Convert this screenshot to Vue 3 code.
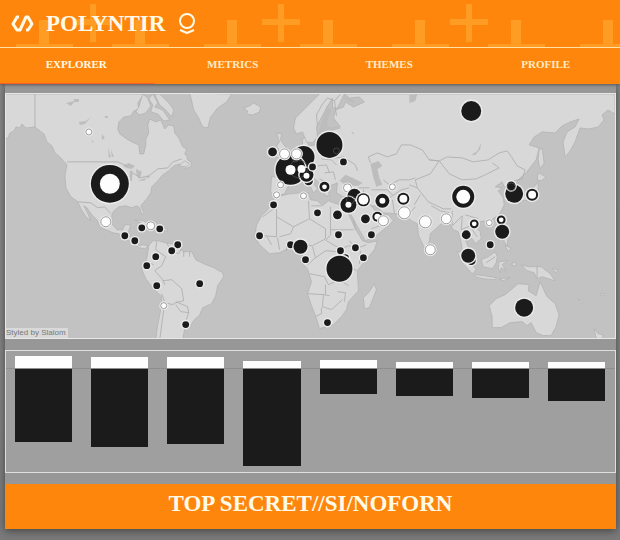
<script setup>
import { ref } from 'vue'

const tabs = ['EXPLORER', 'METRICS', 'THEMES', 'PROFILE']
const active = ref('EXPLORER')

const bars = [
  { up: 12, down: 73 },
  { up: 11, down: 78 },
  { up: 11, down: 75 },
  { up: 7, down: 97 },
  { up: 8, down: 25 },
  { up: 6, down: 27 },
  { up: 6, down: 29 },
  { up: 6, down: 32 },
]

const land = [
  // North and Central America
  'M0 94V140L8 138L10 133L14 131L16 127L20 128L22 124L26 128L35 127L40 131L44 134L47 142L52 146L55 153L61 158L67 165L65 176L66 188L71 197L78 202L81 209L86 217L91 221L88 214L84 206L87 208L92 215L97 220L100 227L106 230L113 233L119 234L125 239L130 241L134 245L140 248L145 249L149 246L143 245L139 246L137 240L131 238L128 236L129 231L131 225L125 225L123 230L117 230L112 224L112 215L114 211L119 207L126 206L132 208L137 206L140 208L142 215L144 213L141 206L147 199L151 193L152 187L158 181L163 175L169 171L174 166L180 164L183 168L188 168L191 167L192 163L188 160L187 156L185 154L187 149L183 147L179 138L175 133L174 126L169 125L165 129L161 120L156 122L150 119L148 125L149 133L146 139L146 145L144 154L140 154L139 145L132 142L127 139L120 134L118 129L119 122L124 117L131 116L134 111L139 109L138 103L144 94Z',
  // Arctic islands
  'M143 94L148 98L151 106L146 113L140 115L136 112L139 107ZM153 94L158 103L155 107L163 110L170 120L164 121L158 114L151 112L153 105L149 99ZM160 94L170 104L174 110L172 117L166 110L160 105L157 99L155 94ZM179 166L185 161L190 164L187 167Z',
  // Greenland and Iceland
  'M190 93L192 101L194 110L199 118L203 127L208 128L211 117L218 108L227 102L232 94ZM244 108L250 106L254 103L261 107L260 112L253 115L247 114L248 111Z',
  // Caribbean
  'M135 220L144 221L150 225L145 225ZM151 225L159 226L157 229L151 228ZM164 229H168V231H164Z',
  // South America
  'M149 246L153 241L158 241L166 243L172 244L178 247L184 252L192 252L196 260L204 264L214 268L223 273L224 277L218 286L216 296L212 304L203 308L200 315L194 321L190 327L185 329L183 340H156L158 325L161 310L162 297L152 287L146 279L142 270L144 265L147 259Z',
  // Africa
  'M257 225L262 216L269 209L271 203L277 197L290 194L301 193L309 193L311 200L318 201L323 206L329 201L340 205L346 206L350 216L356 229L363 241L369 243L378 241L375 250L365 262L358 271L359 291L349 302L347 310L342 317L334 325L320 329L317 319L312 306L308 294L312 282L308 269L302 263L303 253L297 248L290 248L280 253L270 254L260 245L255 237ZM375 284L377 290L370 308L365 309L364 298L370 292Z',
  // Eurasia
  'M345 94L350 98L360 97L365 102L354 107L346 102L344 107L336 110L334 118L341 127L325 130L325 138L315 145L309 146L307 137L303 139L303 147L297 151L290 154L283 159L287 166L287 177L272 177L271 193L277 196L285 194L289 186L298 181L304 180L310 185L314 193L318 189L309 177L313 177L321 184L326 196L330 196L328 187L338 183L337 193L344 197L352 196L352 207L350 212L357 225L366 241L378 235L389 226L394 221L389 215L380 216L372 206L376 206L384 213L398 214L407 215L412 221L418 224L419 235L425 248L430 242L431 234L443 223L449 221L454 230L459 232L462 243L463 250L470 258L474 259L470 249L466 240L468 236L474 240L476 244L482 239L481 232L475 226L480 222L492 220L500 215L505 205L504 198L499 191L503 188L496 187L503 182L505 187L510 187L509 193L513 199L517 196L515 187L519 180L527 173L537 160L540 148L530 145L535 137L543 132L556 133L563 126L571 122L580 119L576 127L568 132L564 142L566 157L571 151L576 142L581 128L590 129L599 127L605 120L603 115L609 110L616 114V94Z',
  // Scandinavia
  'M345 94L338 108L333 108L333 98L326 110L317 127L318 137L313 143L307 142L303 132L297 134L294 128L296 118L304 110L313 101L321 93L335 91Z',
  // British Isles
  'M277 133L282 134L281 140L286 147L290 155L281 158L276 157L281 153L277 146L280 142ZM270 146L276 147L275 154L269 155Z',
  // Japan and Sakhalin
  'M540 150L543 148L545 163L541 169L539 160ZM539 173L547 177L542 181L538 180ZM539 182L539 192L533 199L523 201L520 204L518 198L529 194L535 187Z',
  // South-east Asia
  'M458 252L463 252L477 270L473 274L463 263ZM476 275L485 276L497 278L496 280L484 279L476 277ZM482 260L489 257L496 252L498 257L497 263L493 269L484 267ZM500 262L508 261L503 265L507 271L502 268L501 273L499 268ZM504 235L509 238L508 246L505 242ZM506 246L512 248L509 252ZM522 265L529 267L542 267L551 274L556 281L549 279L543 277L538 279L535 273L528 271ZM513 263H517V266H513ZM500 279L511 278L504 281Z',
  // Australia and New Zealand
  'M490 306L497 299L506 295L512 290L519 284L530 285L529 291L537 296L541 282L545 291L548 297L556 304L560 315L557 327L552 336L544 336L537 333L532 323L528 326L523 322L511 323L502 328L493 328L493 317ZM595 329L599 334L605 336L601 340L597 338ZM553 269L559 270L557 273ZM579 299L584 303L582 304ZM602 294H605V296H602Z',
]

const water = [
  'M327 106L332 110L328 120L328 127L342 128L329 132L327 142L318 144L319 133Z',
  'M340 181L346 175L353 178L363 183L359 186L347 186Z',
  'M371 164L379 161L383 166L378 169L380 178L383 185L377 187L374 178Z',
  'M123 166L129 163L135 166L132 169L127 168ZM130 171L133 171L132 182L130 180ZM136 169L142 172L140 179L137 176ZM138 181L146 178L145 181ZM146 177L151 176L148 179Z',
  'M79 122L86 121L91 117L85 124L80 125ZM66 103L75 101L71 106ZM74 99H79V102H74ZM108 147L111 157L109 158ZM111 149L114 157H112ZM102 134L105 138L102 140ZM92 139L94 143L92 142ZM105 116H108V118H105Z',
  'M342 96L352 99L357 104L350 102ZM352 131L355 134H353ZM410 95L418 94L416 101L410 103ZM344 255L348 256L346 260L343 259Z',
  'M472 155L478 151L482 143L481 149L476 155Z',
]

const borders = [
  'M35 94V127M67 162H118L127 166M78 202L91 203L98 208L105 207L111 214M133 173L140 178L149 176L158 169L168 168L173 162L182 159',
  'M122 238L128 236M134 243L137 241M157 241L156 250L166 257L162 266L155 271L163 280L165 285M167 243L171 251L179 254L182 248M184 251V257M190 252V257M163 281L172 280L182 289L184 301L176 303L173 305L165 303L162 294M165 304L163 317L160 340M176 302L188 307L189 313L181 312L176 305M189 313L185 325M146 262L154 265',
  'M277 207L263 217M277 207V237L264 236M277 217L294 227L310 219L309 201M294 227L291 234L280 237M310 219L326 229V239L313 246L304 245M331 207V235L326 241M331 230H354M267 236L272 245M278 238L280 250M287 242V251M327 241L341 249L350 246L359 248L367 245M313 247L316 258L308 265M316 258L326 251L340 252M310 274L325 277L329 285M308 294L324 295L330 296M326 285V295M322 308V314L316 317M324 295L323 307L332 310L343 300M329 285L340 280L349 286M338 292L346 293L345 302M343 250V262L357 271M350 241L355 247M361 251L360 264M312 206H322M354 219L356 230',
  'M318 126L317 115L323 104L328 98M328 98L335 101L337 116M335 101L341 94M281 178L289 181M295 163L304 171M303 151L303 160M322 159L332 160L337 165M318 166L327 165L330 173M325 173L334 172L336 180M320 179L328 183M330 159L344 157L356 165L358 171M359 188L370 188M371 163L369 157L378 153L388 157L397 154L402 145L411 145L423 150L430 160L439 161M384 180L390 185L400 180L410 180L416 178M372 190L388 190L393 195M390 198L402 190L410 188M364 190L366 201L373 207M356 195L365 202M365 216L376 218M372 229L386 224M395 213L393 200',
  'M430 160L440 161L448 157L463 158L474 162L489 160L500 153L508 151L513 158L518 166L526 170L523 179L515 181M440 161L450 174L463 180L477 179L486 175L500 168L493 163M440 161L431 174L416 180L418 188L410 185M418 188L429 202L444 209L452 209M432 206L441 211L450 213M453 211L453 226L463 216M463 216L462 230L471 226M466 215L479 219M471 227L478 237M415 205L421 195M408 216L416 207M538 267V278M487 263L496 257',
]

// kind: b = solid dark, w = light, i = light core on a dark disc, g = ghost outline
const points = [
  ['b', 110, 184, 19], ['i', 110, 184, 10], ['w', 89, 132, 3], ['w', 106, 222, 5],
  ['b', 125, 236, 3], ['b', 135, 241, 3], ['b', 142, 228, 3], ['w', 151, 226, 4], ['b', 160, 229, 3],
  ['b', 178, 245, 3], ['b', 172, 251, 3], ['b', 156, 257, 3], ['b', 147, 266, 3], ['b', 157, 286, 3],
  ['b', 200, 284, 3], ['w', 164, 306, 3], ['b', 186, 325, 3],
  ['b', 304, 157, 11], ['b', 309, 181, 4], ['b', 291, 170, 15], ['b', 307, 175, 7], ['b', 313, 167, 3],
  ['g', 299, 169, 9], ['g', 296, 159, 3], ['b', 273, 152, 4], ['w', 285, 154, 5], ['w', 297, 154, 5],
  ['i', 291, 170, 5], ['i', 302, 169, 4], ['i', 307, 176, 3], ['w', 281, 185, 3], ['w', 277, 195, 3],
  ['w', 304, 196, 3], ['b', 330, 145, 13], ['g', 337, 151, 3], ['b', 344, 162, 3],
  ['b', 325, 187, 5], ['i', 325, 187, 2.4], ['w', 348, 188, 4], ['b', 355, 196, 7], ['b', 349, 205, 8],
  ['g', 351, 200, 4], ['i', 349, 205, 3], ['b', 364, 200, 6.5], ['i', 364, 200, 5],
  ['b', 383, 201, 7], ['i', 383, 201, 3], ['w', 393, 187, 3], ['b', 404, 199, 6], ['i', 404, 199, 4],
  ['b', 274, 205, 3], ['b', 318, 213, 3], ['b', 338, 215, 4], ['b', 366, 219, 4],
  ['b', 378, 217, 5], ['i', 378, 217, 3], ['w', 384, 221, 5], ['w', 405, 213, 6],
  ['b', 339, 235, 3], ['b', 372, 235, 3], ['b', 356, 248, 3], ['b', 364, 258, 3], ['b', 341, 251, 3],
  ['b', 346, 258, 3], ['b', 340, 269, 13], ['b', 260, 236, 3], ['b', 291, 245, 3], ['b', 301, 247, 7],
  ['b', 306, 260, 3], ['b', 328, 323, 3],
  ['b', 472, 111, 10], ['b', 464, 197, 11], ['i', 464, 197, 7], ['w', 426, 222, 6], ['w', 447, 219, 5],
  ['w', 431, 250, 5], ['b', 515, 194, 9], ['b', 512, 186, 4], ['g', 512, 187, 4],
  ['b', 533, 195, 6], ['i', 533, 195, 4], ['b', 475, 224, 4], ['i', 475, 224, 2.4], ['w', 490, 223, 3],
  ['b', 502, 220, 4], ['i', 502, 220, 2.4], ['b', 467, 235, 4], ['b', 503, 232, 7], ['b', 491, 245, 3],
  ['b', 472, 261, 4], ['b', 469, 256, 7], ['b', 525, 308, 9],
].map(([kind, x, y, r]) => ({ kind, x, y, r: kind === 'b' && r < 5 ? r + 0.4 : r }))
</script>

<template>
  <div class="page">
    <header class="header">
      <svg class="pattern" aria-hidden="true">
        <defs>
          <pattern id="crosses" width="188" height="47" patternUnits="userSpaceOnUse">
            <path d="M90 4h6v15h16v6H96v17h-6V25H74v-6h16zM39 20h10v24h24v3H16v-3h23zM135 20h10v24h24v3h-57v-3h23z" />
          </pattern>
        </defs>
        <rect width="100%" height="47" fill="url(#crosses)" />
      </svg>
      <div class="brand">
        <svg class="logo" viewBox="0 0 24 20" aria-hidden="true">
          <path d="M9 3H7L3 10l4 6h3l6-13h2l4 7-4 6h-2" />
        </svg>
        <h1>POLYNTIR</h1>
        <svg class="mark" viewBox="0 0 18 24" aria-hidden="true">
          <circle cx="9" cy="9" r="7" />
          <path d="M2 18l7 3 7-3" />
        </svg>
      </div>
      <nav class="tabs">
        <button
          v-for="tab in tabs"
          :key="tab"
          type="button"
          :class="['tab', { active: tab === active }]"
          @click="active = tab"
        >{{ tab }}</button>
      </nav>
    </header>

    <main class="content">
      <section class="map">
        <svg viewBox="6 94 610 244" aria-hidden="true">
          <path v-for="(d, i) in land" :key="'l' + i" class="land" :d="d" />
          <path v-for="(d, i) in water" :key="'s' + i" class="water" :d="d" />
          <path v-for="(d, i) in borders" :key="'b' + i" class="border" :d="d" />
          <template v-for="(p, i) in points" :key="i">
            <circle v-if="p.kind === 'b' || p.kind === 'w'" class="halo" :cx="p.x" :cy="p.y" :r="p.r + 1.4" />
            <circle :class="'dot-' + p.kind" :cx="p.x" :cy="p.y" :r="p.r" />
          </template>
        </svg>
        <span class="credit">Styled by Slalom</span>
      </section>

      <section class="chart">
        <div v-for="(bar, i) in bars" :key="i" class="column">
          <div class="above"><div class="up" :style="{ height: bar.up + 'px' }"></div></div>
          <div class="below"><div class="down" :style="{ height: bar.down + 'px' }"></div></div>
        </div>
      </section>

      <footer class="banner">TOP SECRET//SI/NOFORN</footer>
    </main>
  </div>
</template>

<style>
body {
  margin: 0;
  background: #808080;
}
</style>

<style scoped>
.page {
  box-sizing: border-box;
  min-height: 100vh;
  overflow: hidden;
  background: linear-gradient(#8a8a8a, #868686 60%, #7a7a7a);
  font-family: "Liberation Serif", serif;
}
.header {
  position: relative;
  overflow: hidden;
  background: #ff860d;
  box-shadow: 0 1px 3px #555;
  color: #fffbe8;
}
.pattern {
  position: absolute;
  inset: 0;
  width: 100%;
  height: 47px;
}
.pattern path {
  fill: #ff9c24;
}
.brand {
  position: relative;
  display: flex;
  align-items: center;
  box-sizing: border-box;
  height: 48px;
  padding-left: 10px;
  border-bottom: 1px solid #ffe2a8;
}
.logo {
  width: 24px;
  height: 20px;
}
.logo path,
.mark path,
.mark circle {
  fill: none;
  stroke: #fffbe8;
  stroke-width: 3;
  stroke-linejoin: round;
}
.mark {
  width: 18px;
  height: 24px;
  margin-left: 13px;
}
.mark path,
.mark circle {
  stroke-width: 2;
}
h1 {
  margin: 0 0 0 12px;
  font-size: 23px;
  line-height: 24px;
}
.tabs {
  display: flex;
  margin: 0 -4px 0 -2px;
}
.tab {
  flex: 1;
  height: 36px;
  padding: 0 0 4px;
  border: 0;
  border-bottom: 1px solid transparent;
  background: none;
  color: #ffecc4;
  font: bold 11px/14px "Liberation Serif", serif;
}
.tab.active {
  border-bottom-color: #ff5c26;
  color: #fffbe8;
}
.content {
  display: flex;
  flex-direction: column;
  gap: 11px;
  margin: 0 4px 11px 5px;
  padding-top: 9px;
  background: #979797;
  box-shadow: 0 2px 8px #444;
}
.map {
  position: relative;
  border: 1px solid #e8e8e8;
  background: #c2c2c2;
}
.map svg {
  display: block;
  width: 100%;
}
.land {
  fill: #d8d8d8;
  stroke: #b0b0b0;
  stroke-width: 0.7;
}
.water {
  fill: #bdbdbd;
}
.border {
  fill: none;
  stroke: #b0b0b0;
  stroke-width: 0.9;
}
.halo {
  fill: #ececec;
}
.dot-b {
  fill: #1b1b1b;
}
.dot-w,
.dot-i {
  fill: #fdfdfd;
}
.dot-w {
  stroke: #777;
  stroke-width: 0.7;
}
.dot-g {
  fill: none;
  stroke: #555;
  stroke-width: 0.7;
}
.credit {
  position: absolute;
  left: 0;
  bottom: 0;
  padding-right: 2px;
  background: #d9d9d9;
  color: #777;
  font: 8px/10px "Liberation Sans", sans-serif;
}
.chart {
  display: grid;
  grid-template-columns: repeat(8, 1fr);
  border: 1px solid #dedede;
  background: #9f9f9f;
}
.above,
.below {
  padding: 0 10px 0 9px;
}
.above {
  display: flex;
  align-items: flex-end;
  height: 17px;
  border-bottom: 1px solid #8e8e8e;
}
.below {
  min-height: 103px;
}
.up {
  flex: 1;
  background: #fdfdfd;
}
.down {
  background: #1b1b1b;
}
.banner {
  padding: 7px 0 12px;
  background: #ff860d;
  color: #fffbe8;
  font-size: 23px;
  font-weight: bold;
  line-height: 26px;
  text-align: center;
}
</style>
